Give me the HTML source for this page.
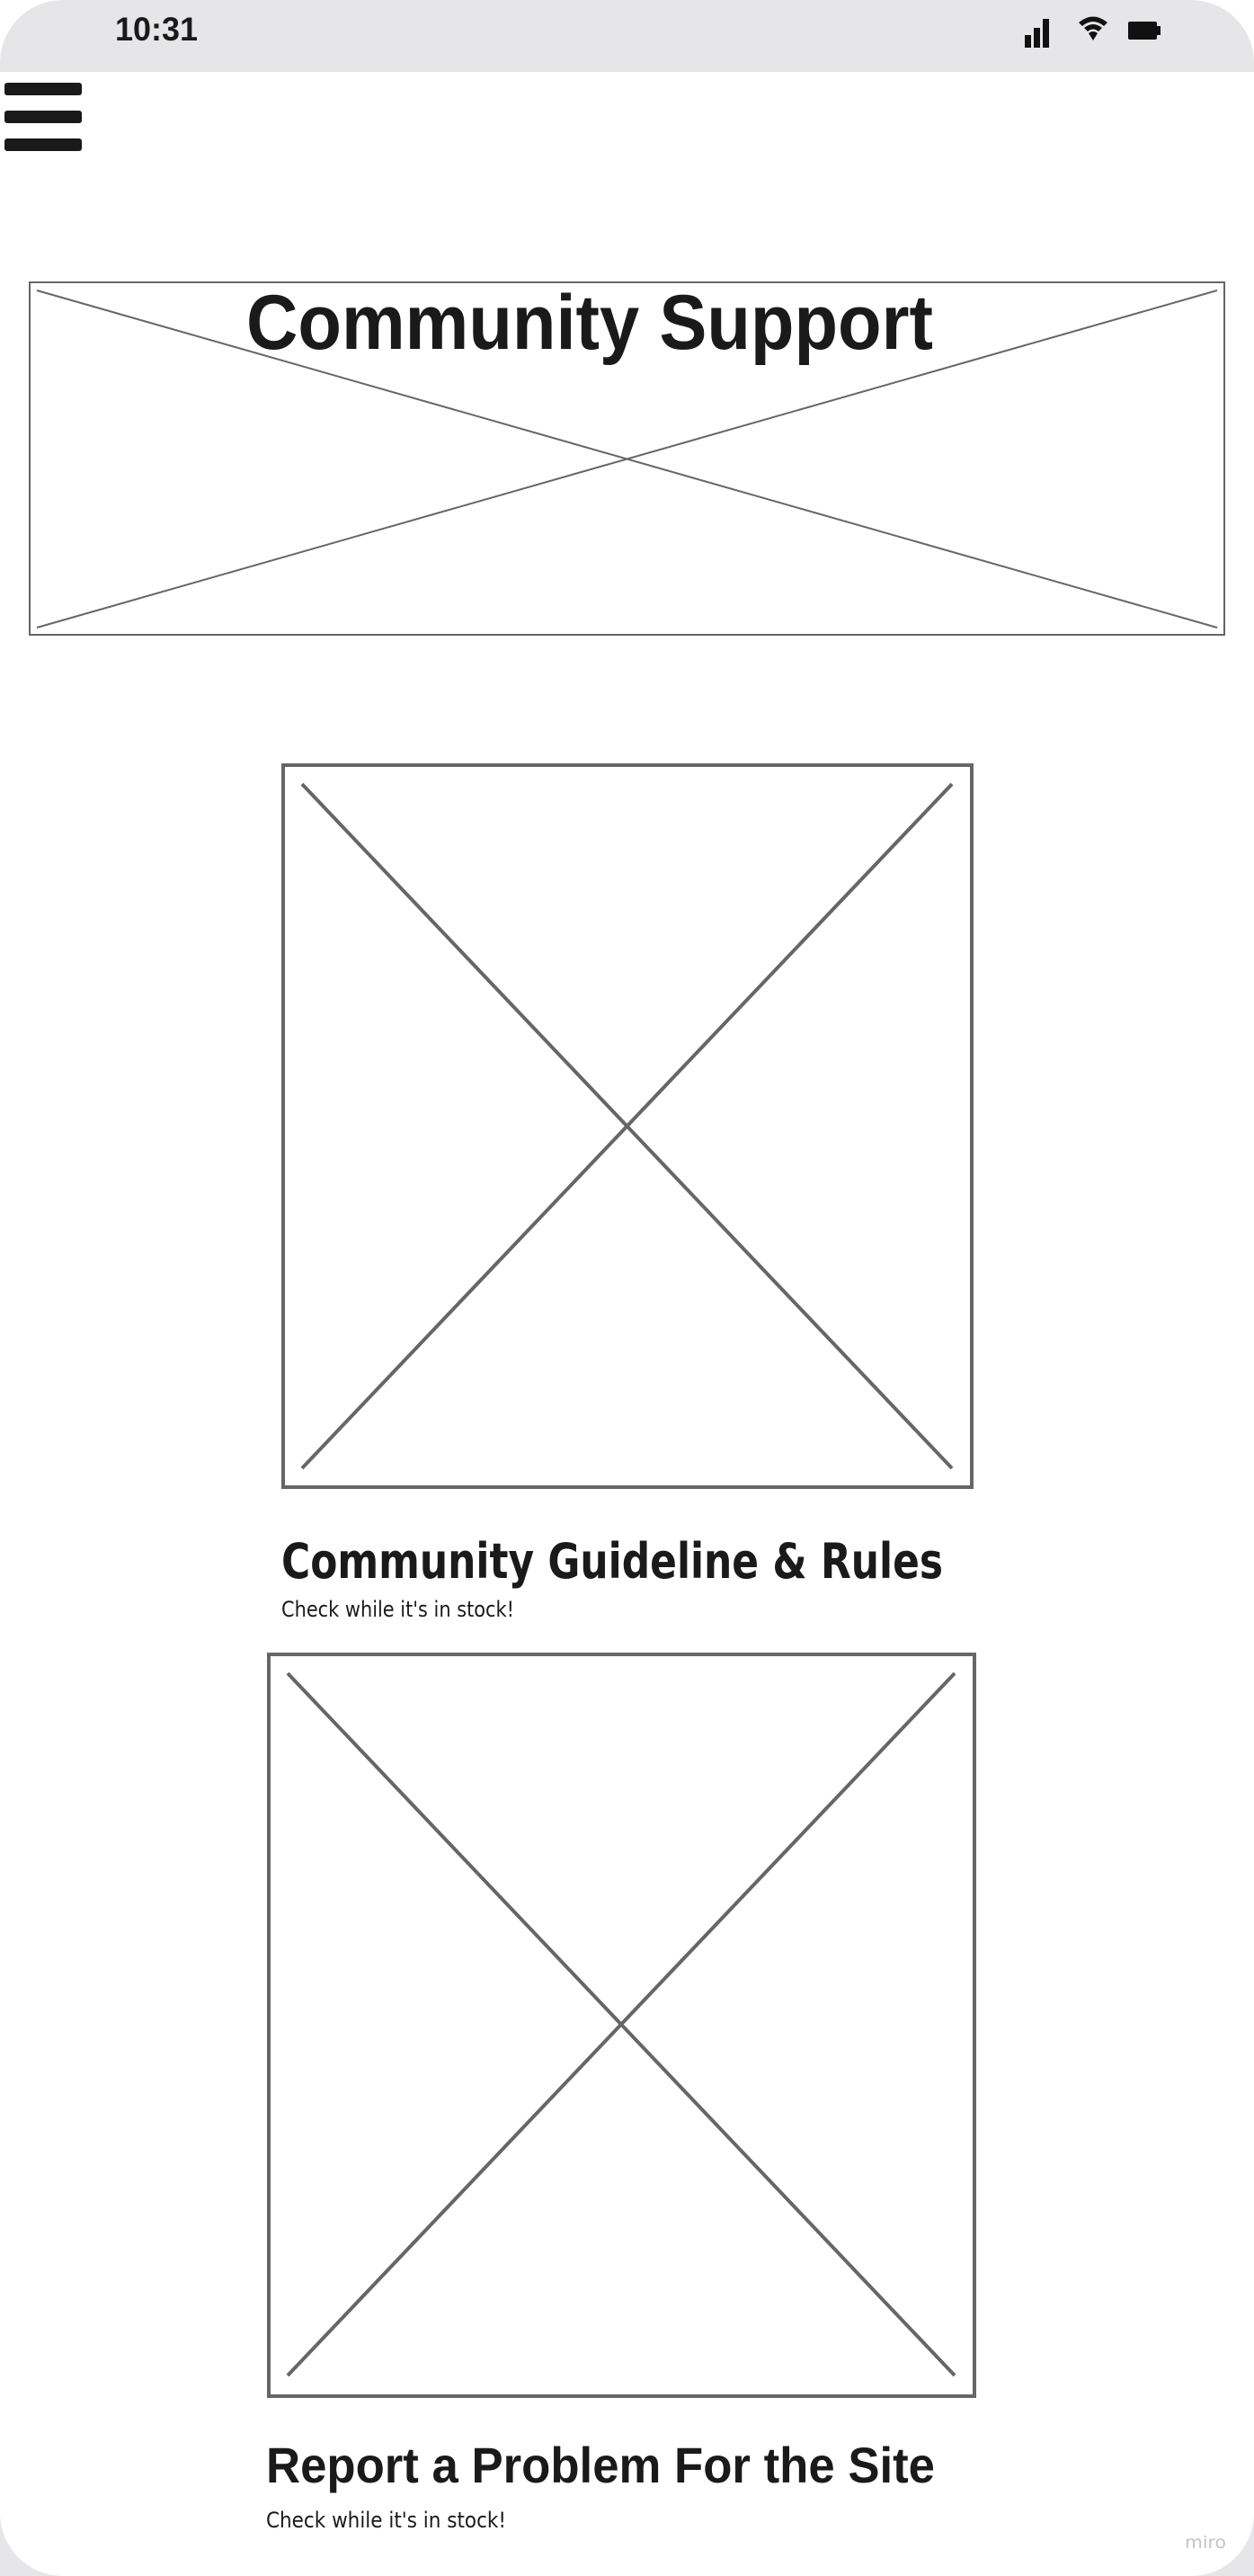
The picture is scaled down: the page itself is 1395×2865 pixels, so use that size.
<!DOCTYPE html>
<html><head><meta charset="utf-8"><style>html,body{margin:0;padding:0;background:#fff}svg{display:block}</style></head>
<body>
<svg width="1395" height="2865" viewBox="0 0 1395 2865" xmlns="http://www.w3.org/2000/svg">
<rect x="0" y="2700" width="1395" height="165" fill="#e6e6e8"/>
<rect x="0" y="0" width="1395" height="2865" rx="70" ry="70" fill="#fff"/>
<path d="M0 80 V70 A70 70 0 0 1 70 0 H1325 A70 70 0 0 1 1395 70 V80 Z" fill="#e6e6e8"/>
<text x="128" y="45" font-family="Liberation Sans, sans-serif" font-weight="bold" font-size="37" fill="#1a1a1a" textLength="92" lengthAdjust="spacingAndGlyphs">10:31</text>
<g fill="#111">
<rect x="1140" y="39" width="7" height="14"/><rect x="1150" y="31" width="7" height="22"/><rect x="1160" y="21" width="7" height="32"/>
<path d="M1200 25 Q1216 12 1232 25 L1228 29 Q1216 19 1204 29 Z M1206 31 Q1216 23 1226 31 L1222 35 Q1216 30 1210 35 Z M1211 37 Q1216 33 1221 37 L1216 45 Z"/>
<rect x="1255" y="24" width="32" height="20" rx="2"/><rect x="1287" y="29" width="4" height="10"/>
</g>
<g fill="#1a1a1a">
<rect x="5" y="92" width="86" height="14" rx="3"/><rect x="5" y="123" width="86" height="14" rx="3"/><rect x="5" y="154" width="86" height="14" rx="3"/>
</g>
<rect x="33" y="314" width="1329" height="392" fill="none" stroke="#666" stroke-width="2"/>
<line x1="41" y1="323" x2="1354" y2="698" stroke="#666" stroke-width="2"/>
<line x1="41" y1="698" x2="1354" y2="323" stroke="#666" stroke-width="2"/>
<text x="274" y="388" font-family="Liberation Sans, sans-serif" font-weight="bold" font-size="86" fill="#1a1a1a" textLength="764" lengthAdjust="spacingAndGlyphs">Community Support</text>
<rect x="315" y="851" width="766" height="803" fill="none" stroke="#666" stroke-width="4"/>
<line x1="336" y1="872" x2="1059" y2="1633" stroke="#666" stroke-width="4"/>
<line x1="336" y1="1633" x2="1059" y2="872" stroke="#666" stroke-width="4"/>
<text x="313" y="1755" font-family="DejaVu Sans, sans-serif" font-weight="bold" font-size="54" fill="#1a1a1a" textLength="736" lengthAdjust="spacingAndGlyphs">Community Guideline &amp; Rules</text>
<text x="313" y="1798" font-family="DejaVu Sans, sans-serif" font-size="24" fill="#1a1a1a" textLength="259" lengthAdjust="spacingAndGlyphs">Check while it's in stock!</text>
<rect x="299" y="1840" width="785" height="825" fill="none" stroke="#666" stroke-width="4"/>
<line x1="320" y1="1861" x2="1062" y2="2642" stroke="#666" stroke-width="4"/>
<line x1="320" y1="2642" x2="1062" y2="1861" stroke="#666" stroke-width="4"/>
<text x="296" y="2761" font-family="Liberation Sans, sans-serif" font-weight="bold" font-size="56" fill="#1a1a1a" textLength="744" lengthAdjust="spacingAndGlyphs">Report a Problem For the Site</text>
<text x="296" y="2811" font-family="DejaVu Sans, sans-serif" font-size="24" fill="#1a1a1a" textLength="267" lengthAdjust="spacingAndGlyphs">Check while it's in stock!</text>
<text x="1318" y="2834" font-family="DejaVu Sans, sans-serif" font-size="19" fill="#c4c4c8" textLength="46" lengthAdjust="spacingAndGlyphs">miro</text>
</svg>
</body></html>
